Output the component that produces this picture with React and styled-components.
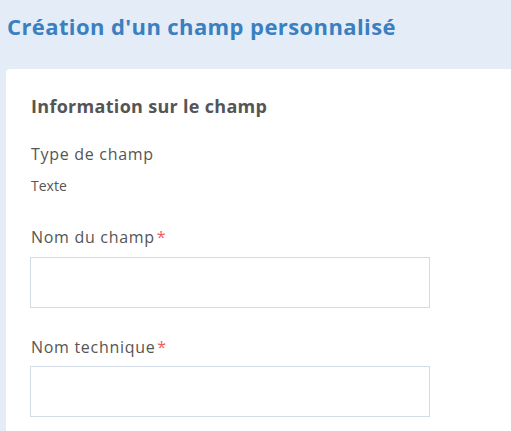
import React from 'react';
import styled, { createGlobalStyle } from 'styled-components';

const GlobalStyle = createGlobalStyle`
  html, body {
    margin: 0;
    padding: 0;
    background: #e4ecf8;
    font-family: "Open Sans", "Noto Sans", sans-serif;
  }
`;

const Page = styled.div`
  display: flex;
  flex-direction: column;
  padding-left: 6px;
  height: 100vh;
  overflow: hidden;
`;

const Title = styled.h1`
  margin: 0;
  padding: 11px 0 0 1px;
  height: 69px;
  box-sizing: border-box;
  flex: none;
  font-size: 22px;
  font-weight: 700;
  line-height: 30px;
  letter-spacing: 0.4px;
  color: #3a7fc0;
`;

const Card = styled.section`
  flex: 1;
  background: #fff;
  border-radius: 4px 0 0 0;
  padding: 25px 0 0 25px;
`;

const Heading = styled.h2`
  margin: 0 0 26px;
  font-size: 18px;
  font-weight: 700;
  line-height: 24px;
  letter-spacing: 0.3px;
  color: #555;
`;

const Field = styled.div`
  display: flex;
  flex-direction: column;
  margin-bottom: ${p => p.$gap || 28}px;
`;

const Label = styled.label`
  font-size: 16px;
  font-weight: 500;
  line-height: 20px;
  letter-spacing: 0.7px;
  color: #555;
  margin-bottom: ${p => p.$gap || 0}px;
`;

const Star = styled.span`
  color: #f05a5a;
  margin-left: 2px;
`;

const Value = styled.div`
  margin-top: 13px;
  font-size: 14px;
  line-height: 18px;
  color: #555;
`;

const Input = styled.input`
  width: 400px;
  height: 51px;
  box-sizing: border-box;
  border: 1px solid #d3dbe6;
  border-radius: 0;
  background: #fff;
  margin-left: -1px;
  outline: none;
  padding: 0 10px;
  font: inherit;
`;

export default function App() {
  return (
    <Page>
      <GlobalStyle />
      <Title>Création d'un champ personnalisé</Title>
      <Card>
        <Heading>Information sur le champ</Heading>
        <Field $gap={32}>
          <Label>Type de champ</Label>
          <Value>Texte</Value>
        </Field>
        <Field $gap={29}>
          <Label $gap={10}>Nom du champ<Star>*</Star></Label>
          <Input type="text" />
        </Field>
        <Field>
          <Label $gap={9}>Nom technique<Star>*</Star></Label>
          <Input type="text" />
        </Field>
      </Card>
    </Page>
  );
}
